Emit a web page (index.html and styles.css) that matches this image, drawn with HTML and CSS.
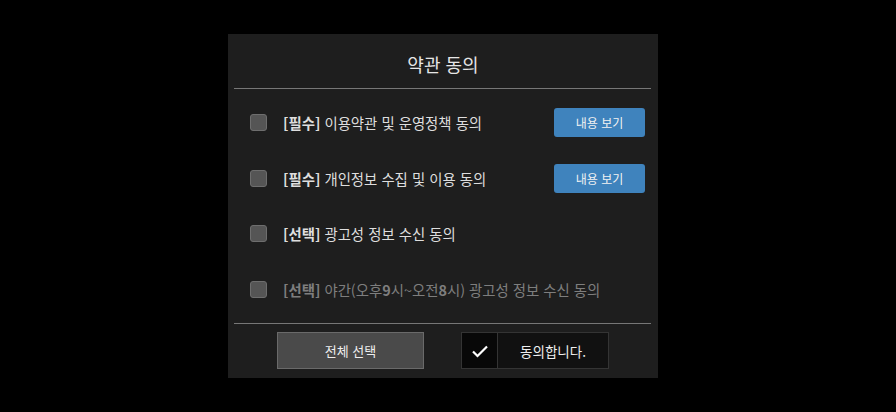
FILE: index.html
```html
<!DOCTYPE html>
<html lang="ko">
<head>
<meta charset="utf-8">
<link rel="stylesheet" href="styles.css">
</head>
<body>
<div class="dialog">
  <div class="header">약관 동의</div>
  <div class="divider"></div>
  <div class="list">
    <div class="row">
      <span class="box"></span>
      <span class="label"><b>[필수]</b> 이용약관 및 운영정책 동의</span>
      <button class="view">내용 보기</button>
    </div>
    <div class="row">
      <span class="box"></span>
      <span class="label"><b>[필수]</b> 개인정보 수집 및 이용 동의</span>
      <button class="view">내용 보기</button>
    </div>
    <div class="row">
      <span class="box"></span>
      <span class="label"><b>[선택]</b> 광고성 정보 수신 동의</span>
    </div>
    <div class="row dim">
      <span class="box"></span>
      <span class="label"><b>[선택]</b> 야간(오후<b>9</b>시~오전<b>8</b>시) 광고성 정보 수신 동의</span>
    </div>
  </div>
  <div class="divider"></div>
  <div class="footer">
    <button class="all">전체 선택</button>
    <div class="agree">
      <span class="check"><svg width="18" height="14" viewBox="0 0 18 14"><path d="M2 7.5 L6.5 12 L16 2.5" fill="none" stroke="#fff" stroke-width="2.2"/></svg></span>
      <span class="agree-text">동의합니다.</span>
    </div>
  </div>
</div>
</body>
</html>
```
FILE: styles.css
```css
html, body {
  margin: 0;
  padding: 0;
  background: #000;
  width: 896px;
  height: 412px;
  overflow: hidden;
  font-family: "Noto Sans CJK KR", "Noto Sans", sans-serif;
}
body {
  display: flex;
  justify-content: flex-start;
  padding: 34px 0 0 228px;
  box-sizing: border-box;
}
.dialog {
  width: 430px;
  height: 344px;
  background: #1e1e1e;
  display: flex;
  flex-direction: column;
}
.header {
  height: 54px;
  display: flex;
  align-items: center;
  justify-content: center;
  padding-top: 6px;
  box-sizing: border-box;
  color: #e6e6e6;
  font-size: 18px;
}
.divider {
  height: 1px;
  margin: 0 7px 0 6px;
  background: #777;
}
.list {
  padding: 6px 0;
  display: flex;
  flex-direction: column;
  height: 234px;
  box-sizing: border-box;
}
.row {
  height: 55.5px;
  display: flex;
  align-items: center;
  padding: 0 13px 0 22px;
  color: #dedede;
  font-size: 14.4px;
}
.row.dim { color: #7e7e7e; }
.row b { font-weight: 700; }
.box {
  width: 15px;
  height: 15px;
  border: 1px solid #6e6e6e;
  background: #555;
  border-radius: 3px;
  flex: none;
}
.label {
  margin-left: 16px;
  flex: 1;
}
.view {
  width: 91px;
  height: 29px;
  border: none;
  border-radius: 3px;
  background: #3f83bd;
  color: #f2f2f2;
  font-family: inherit;
  font-size: 12px;
  padding: 0;
}
.footer {
  flex: 1;
  display: flex;
  justify-content: center;
  align-items: flex-start;
  padding-top: 8px;
  gap: 37px;
}
.all {
  width: 147px;
  height: 37px;
  background: #4a4a4a;
  border: 1px solid #6a6a6a;
  color: #eee;
  font-family: inherit;
  font-size: 13px;
  padding: 0;
}
.agree {
  width: 148px;
  height: 37px;
  box-sizing: border-box;
  border: 1px solid #343434;
  background: #111;
  display: flex;
}
.check {
  width: 35px;
  border-right: 1px solid #343434;
  background: #080808;
  display: flex;
  align-items: center;
  justify-content: center;
}
.agree-text {
  flex: 1;
  display: flex;
  align-items: center;
  justify-content: center;
  color: #eee;
  font-size: 13.5px;
}
```
